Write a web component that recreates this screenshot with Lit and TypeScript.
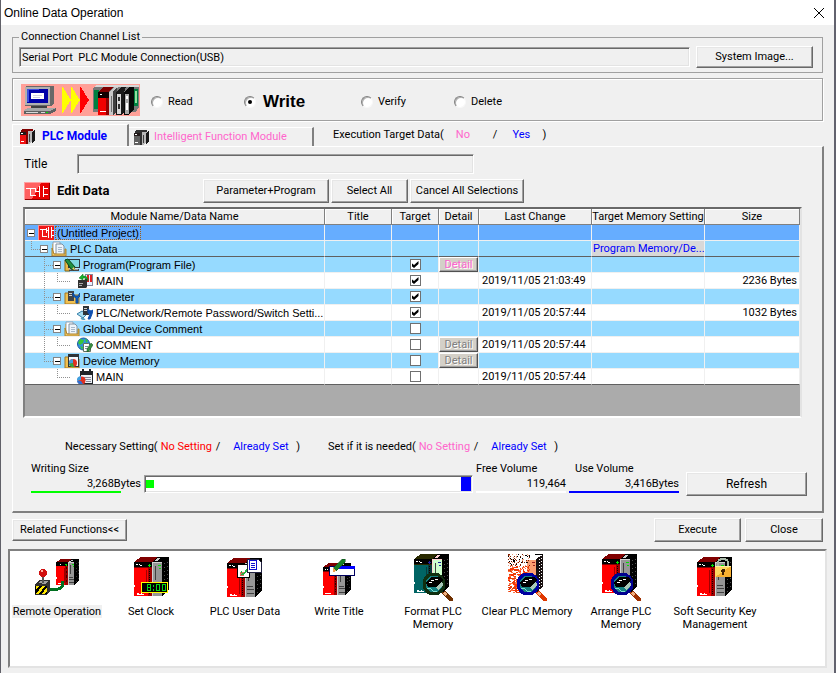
import { LitElement, html, svg, css, nothing } from "lit";
import { customElement } from "lit/decorators.js";
import { classMap } from "lit/directives/class-map.js";

interface DataRow {
  name: string;
  depth: number;
  icon: string;
  tone: "root" | "group" | "leaf";
  last?: boolean;
  check?: boolean;
  detail?: "set" | "off";
  date?: string;
  memory?: string;
  size?: string;
}

const rows: DataRow[] = [
  { name: "(Untitled Project)", depth: 0, icon: "project", tone: "root" },
  { name: "PLC Data", depth: 1, icon: "folder", tone: "group", last: true, memory: "Program Memory/De..." },
  { name: "Program(Program File)", depth: 2, icon: "program", tone: "group", check: true, detail: "set" },
  { name: "MAIN", depth: 3, icon: "main", tone: "leaf", check: true, date: "2019/11/05 21:03:49", size: "2236 Bytes" },
  { name: "Parameter", depth: 2, icon: "param", tone: "group", check: true },
  { name: "PLC/Network/Remote Password/Switch Setti...", depth: 3, icon: "network", tone: "leaf", check: true, date: "2019/11/05 20:57:44", size: "1032 Bytes" },
  { name: "Global Device Comment", depth: 2, icon: "folder", tone: "group", check: false },
  { name: "COMMENT", depth: 3, icon: "comment", tone: "leaf", check: false, detail: "off", date: "2019/11/05 20:57:44" },
  { name: "Device Memory", depth: 2, icon: "memory", tone: "group", last: true, check: false, detail: "off" },
  { name: "MAIN", depth: 3, icon: "device", tone: "leaf", last: true, check: false, date: "2019/11/05 20:57:44" },
];

const headers = ["Module Name/Data Name", "Title", "Target", "Detail", "Last Change", "Target Memory Setting", "Size"];

const folderShape = svg`
  <path d="M1 4h5l1 2h8v9H1z" fill="#f0c050" stroke="#a87820"/>`;

const rowIcons: Record<string, unknown> = {
  project: svg`
    <rect width="16" height="16" fill="#f01818"/><path d="M0 0h16v1H1v15H0z" fill="#ff9090"/>
    <path d="M2 4.500h6M4.500 5v7M4 11.500h5M8.500 3v5M8.500 5.500h2M10.500 2v11M13.500 2v11M14 5.500h2M14 10.500h2" stroke="#fff" fill="none"/>`,
  folder: svg`
    <path d="M1 3h5v12H1z" fill="#e8b848"/><path d="M2 1h7v12H2z" fill="#fff" stroke="#90a0b0"/>
    <path d="M5 3h6l2 2v9H5z" fill="#eef4fa" stroke="#8090a0"/><path d="M7 6.500h4M7 8.500h4M7 10.500h4" stroke="#a8b8c8"/>
    <path d="M1 7l2 6h11V8h1v7H1z" fill="#f0c868" stroke="#b08428"/>`,
  program: svg`
    <path d="M1 3h5v11H1z" fill="#e8b848" stroke="#8c6814"/><rect x="4.500" y="2.500" width="11" height="8" fill="#80d8e0" stroke="#303840"/>
    <path d="M5 12h10v2H5z" fill="#484848"/><path d="M5 12h9" stroke="#eee"/>
    <path d="M1 3l3-1 7 8-1 3-3-1z" fill="#209040" stroke="#0c4818"/><path d="M10 10l1 3-3-1z" fill="#ffd070"/>`,
  main: svg`
    <rect x="8.500" y="1.500" width="7" height="11" fill="#e8f0ff" stroke="#889"/><path d="M11 2v7M14 2v7" stroke="#e02020" stroke-width="2"/>
    <path d="M1 7h6l3-2v9l-2 2H1z" fill="#303030"/><path d="M2 10.500h4M2 12.500h3" stroke="#aaa"/>
    <path d="M2 5l4-4v2c4 0 5 2 5 5-2-3-3-3-5-3v2z" fill="#18b030" stroke="#087010" stroke-width=".5"/>`,
  param: svg`${folderShape}
    <path d="M4 2h6v10H4z" fill="#404448"/><path d="M5 4.500h3M5 6.500h3" stroke="#ccc"/>
    <path d="M9 4v3l3 2v5h2V9l2-2V4l-2 3h-3z" fill="#1060c0" stroke="#0848a0"/>`,
  network: svg`
    <path d="M0 9l5-3 5 3-4 4z" fill="#a8dcf0" stroke="#3880a8"/><path d="M4 13l4 2" stroke="#58a0c0" stroke-width="2"/>
    <path d="M6 1h6v9H6z" fill="#303438"/><path d="M7 3.500h3M7 5.500h3" stroke="#ccc"/>
    <path d="M11 4v4l2 1-2 5h2l2-5 1-4-2 1-2-1z" fill="#1050b0" stroke="#1050b0"/>`,
  comment: svg`
    <circle cx="6.500" cy="7" r="6" fill="#3090e0" stroke="#1858a0"/><path d="M3 2l4 1-1 3-3 2-2-2zM8 1l3 3-2 2zM3 9l3 1-1 3z" fill="#38c838"/>
    <path d="M6.500 6.500h5l2 2v6h-7z" fill="#fff" stroke="#607060"/><path d="M8 9.500h3M8 11.500h4" stroke="#789"/>
    <path d="M10 12l4-6 2 2-4 6-2 1z" fill="#389040" stroke="#104818" stroke-width=".5"/>`,
  memory: svg`${folderShape}
    <rect x="4.500" y="2.500" width="10" height="11" fill="#f4f8fc" stroke="#303438"/><path d="M4 1h11v3H4z" fill="#303438"/>
    <circle cx="9" cy="10" r="4" fill="#e03020"/><path d="M9 10V6a4 4 0 0 0-4 5z" fill="#40a0e0"/><path d="M9 10l-4 1a4 4 0 0 0 5 3z" fill="#30a840"/>`,
  device: svg`
    <rect x="3.500" y="2.500" width="12" height="12" fill="#eef2f6" stroke="#202428"/><path d="M3 2h13v4H3zM5 0h2v3H5zM12 0h2v3h-2z" fill="#202428"/>
    <path d="M7 8.500h7M8 10.500h6M9 12.500h5" stroke="#889"/>
    <circle cx="4.500" cy="11.500" r="4" fill="#e03020"/><path d="M4 11V7a4 4 0 0 0-4 5z" fill="#40a0e0"/><path d="M4 12H0a4 4 0 0 0 6 3z" fill="#3070d0"/>`,
};

interface TowerColors { top: string; body: string; side: string; box: string; lamp: string; edge: string; }
const red: TowerColors = { top: "#800000", body: "#ff0000", side: "#a00000", box: "#969696", lamp: "#00e000", edge: "#d0d0d0" };
const teal: TowerColors = { top: "#2a2a00", body: "#006464", side: "#083c3c", box: "#ccffcc", lamp: "#2020a0", edge: "#ffd0d0" };

const tower = (c: TowerColors) => svg`
  <path d="M0 5l7-5h17l-6 5z" fill=${c.top}/>
  <path d="M18 5l6-5h11v33l-7 6V5z" fill="#000"/>
  <path d="M20 4l4-3h3l-4 3z" fill=${c.edge}/>
  <rect y="5" width="18" height="6" fill="#000"/>
  <path d="M2 7h2v1H2zM5 7h1v1H5zM6 8h2v1H6z" fill="#fff"/>
  <path d="M15 7h1v3h-1zM14 8h3v1h-3z" fill=${c.lamp}/>
  <rect y="11" width="14" height="28" fill=${c.body}/>
  <path d="M0 10h18v1H0z" fill=${c.top}/>
  <path d="M12 13h1v23h-1z" fill=${c.side}/>
  <path d="M3 36h2v1h2v-1h1v1h2v1H3z" fill="#fff"/>
  <path d="M0 28h1v2H0z" fill="#fff"/>
  <rect x="14" y="11" width="4" height="28" fill=${c.side}/>
  <path d="M15.500 12v26" stroke="#100" stroke-dasharray="1 1"/>
  <rect x="18" y="5" width="10" height="34" fill=${c.box}/>
  <path d="M18 5h1v34h-1zM18 5h10v1H18z" fill=${c.edge}/>
  <path d="M24 8h3v1h-3zM25 11h2v1h-2z" fill=${c.lamp}/>
  <path d="M21 9h1v14h-1zM20 28h6v1h-6zM20 31h7v1h-7zM20 35h7v1h-7z" fill="#404040"/>
  <path d="M30.500 6v30M33.500 5v28" stroke="#505050" stroke-dasharray="1 3"/>`;

const lens = (rim: string, handle: string) => svg`
  <path d="M28 38l3-1 8 7v3l-3 1-8-8z" fill=${handle}/><path d="M29 39l2-1 2 2-2 2z" fill="#f0b080"/>
  <circle cx="20" cy="30" r="10" fill="#148080" stroke=${rim} stroke-width="3"/>
  <path d="M12 29l5-6h10l2 3-7 7h-8z" fill="#000"/>
  <path d="M17 26.500h3M21 25.500h3M15 28.500h3" stroke="#fff"/><path d="M22 34l6-7 1 4-4 5z" fill="#a8c8b8"/>
  <path d="M13 34l4 1 3 3 3-1" stroke="#80e0d0" fill="none"/>`;

const scatter = Array.from({ length: 420 }, (_, i) => {
  const h = (i * 7919 + i * i * 31) % 10007;
  const x = h % 22;
  const y = Math.floor(h / 22) % 39;
  const shade = y < 12 ? ["#802000", "#000", "#f0a080"][i % 3] : ["#ff3000", "#e04010", "#ff7040"][i % 3];
  return svg`<rect x=${x} y=${y} width=${y > 12 && x < 12 ? 2 : 1} height="1" fill=${shade}/>`;
});

const toolIcons: Record<string, unknown> = {
  remote: svg`
    <g transform="translate(23 6) scale(.66)">${tower(red)}</g>
    <path d="M15 36h10q5 0 5-8" fill="none" stroke="#007020" stroke-width="3"/>
    <path d="M2 31l4-4h11v11l-3 4H2z" fill="#303030"/><rect x="2" y="33" width="12" height="8" fill="#000"/>
    <path d="M3 41l6-8h3l-6 8zM9 41l5-7v4l-2 3zM3 37l3-4H3z" fill="#ffe800"/>
    <path d="M5 30l2-2h8l-2 3z" fill="#a0a0a0"/><path d="M9 20h2v10H9z" fill="#555"/>
    <circle cx="10" cy="20" r="4" fill="#d01010"/><path d="M8 17h2v2H8z" fill="#ffb0a0"/>`,
  clock: svg`<g transform="translate(7 4)">${tower(red)}
    <rect x="7.500" y="25.500" width="26" height="10" fill="#000" stroke="#ffff00"/>
    <path d="M13.500 27.500h3v6h-3zM13 30.500h4M19.500 28v2M19.500 32v2M22.500 27.500h3v6h-3zM28.500 27.500h3v6h-3z" fill="none" stroke="#00d818"/></g>`,
  user: svg`<g transform="translate(6 5)">${tower(red)}
    <path d="M10.500 6.500h9l3 3v10h-12z" fill="#fff" stroke="#000"/><path d="M13 14h4v4h-4z" fill="#e07060"/>
    <path d="M14 13l2 4 4-6M14 17l7-4" stroke="#20b040" fill="none"/>
    <path d="M20.500 1.500h11l3 3v10h-14z" fill="#fff" stroke="#202040"/><rect x="22.500" y="2.500" width="7" height="9" fill="#fff" stroke="#1010d0"/>
    <path d="M24 5.500h4M24 7.500h4M24 9.500h4" stroke="#1010d0"/></g>`,
  title: svg`<g transform="translate(8 10) scale(.8 .82)">${tower(red)}</g>
    <rect x="14.500" y="13.500" width="25" height="9" fill="#fff" stroke="#000060"/><path d="M22 13h18v3H22z" fill="#0000ff"/>
    <path d="M27 6h3v3L21 18l-3-3z" fill="#188028" stroke="#0c4818" stroke-width=".5"/><path d="M18 15l3 3-3 1z" fill="#f0a050"/>`,
  format: svg`<g transform="translate(5 1)">${tower(teal)}${lens("#103010", "#703000")}</g>`,
  clear: svg`<g transform="translate(5 1)">
    <path d="M28 5l7-5v33l-7 6z" fill="#181010"/><path d="M27 0h8v1h-8z" fill="#000"/>
    <path d="M31.500 2v34M33.500 1v32" stroke="#fff" stroke-dasharray="1 2"/>
    <path d="M19 6h9v18h-9z" fill="#ffa070"/><path d="M24 8h3v1h-3zM25 11h2v1h-2z" fill="#a02020"/>
    ${scatter}${lens("#0000a0", "#e03800")}</g>`,
  arrange: svg`<g transform="translate(5 1)">${tower(red)}${lens("#000090", "#a03000")}</g>`,
  key: svg`<g transform="translate(6 4)">${tower(red)}
    <path d="M21 11V6q0-4 5-4t5 4v5" fill="none" stroke="#a8b8a8" stroke-width="2"/>
    <rect x="18" y="9" width="16" height="11" fill="#ffd860"/><path d="M18 20L34 9v11z" fill="#f8b030"/><path d="M18 9h16v1H18z" fill="#fff0a0"/>
    <path d="M25 12h3v3h-1v3h-2v-3h-1v-2z" fill="#402000"/></g>`,
};

const tools = [
  { icon: "remote", label: "Remote Operation", active: true },
  { icon: "clock", label: "Set Clock" },
  { icon: "user", label: "PLC User Data" },
  { icon: "title", label: "Write Title" },
  { icon: "format", label: "Format PLC Memory" },
  { icon: "clear", label: "Clear PLC Memory" },
  { icon: "arrange", label: "Arrange PLC Memory" },
  { icon: "key", label: "Soft Security Key Management" },
];

const transferArt = html`<svg class="art" viewBox="0 0 119 32" shape-rendering="crispEdges" aria-hidden="true">
  <rect width="119" height="32" fill="#ffa098"/>
  <path d="M4 3l2-1h27v17l-3 3H4z" fill="#686868"/><rect x="4" y="3" width="25" height="18" fill="#b0b0b0"/>
  <rect x="6" y="5" width="21" height="14" fill="#0000a8"/><path d="M6 5h12v1H8v12H6z" fill="#4050e0"/>
  <rect x="10" y="9" width="13" height="6" fill="#fff"/><path d="M12 11.500h9M12 13.500h7" stroke="#d0d0e0"/>
  <path d="M10 22h16v2H10z" fill="#404040"/>
  <path d="M7 24h27l1 3-6 3H3v-4z" fill="#a8a8a8"/><path d="M3 27h26v3H3zM29 27l6-3v3l-6 3z" fill="#606060"/>
  <path d="M5 28.500h12M20 28.500h4" stroke="#d8d8d8"/><path d="M25 28.500h2" stroke="#00e000"/>
  <path d="M41 2l9 14-9 14zM50 2l9 14-9 14z" fill="#ffff00"/><path d="M59 2l9 14-9 14z" fill="#ff0000"/>
  <path d="M72 5l3-4h43v22l-3 5H72z" fill="#787878"/><path d="M75 1h43v2H74z" fill="#d8d8d8"/>
  <rect x="73" y="6" width="5" height="19" fill="#008040"/><rect x="112" y="5" width="5" height="17" fill="#008040"/>
  <path d="M114 7h2v12h-2z" fill="#90e0a0"/>
  <path d="M77 8l5-5h10l-5 5z" fill="#800000"/><rect x="77" y="8" width="11" height="23" fill="#f00000"/><rect x="77" y="8" width="11" height="6" fill="#100000"/>
  <path d="M79 10h2v1h-2zM79 27h6v1h-6z" fill="#fff"/><path d="M85 14h3v17h-3z" fill="#900000"/>
  <path d="M88 8l5-5h4l-3 5v23h-6z" fill="#c8c8c8"/><path d="M92 8l4-5v25l-4 3z" fill="#404040"/>
  <path d="M90.500 12v16" stroke="#707070"/>
  <path d="M95 9l5-6h5l-2 5v20l-3 3h-5z" fill="#181818"/><rect x="96" y="10" width="4" height="20" fill="#d8d8d8"/><path d="M97 13h2v4h-2zM97 20h2v5h-2z" fill="#303030"/>
  <path d="M103 9l5-6h5v22l-5 6h-5z" fill="#080808"/><rect x="104" y="10" width="4" height="20" fill="#a8a8a8"/><path d="M105 12h2v3h-2zM105 19h2v7h-2z" fill="#fff"/>
</svg>`;

const moduleIcon = (body: string, shade: string) => html`<svg class="ico16" viewBox="0 0 16 16" shape-rendering="crispEdges" aria-hidden="true">
  <path d="M0 4l3-4h12l-3 4z" fill=${shade}/><rect y="4" width="6" height="12" fill=${body}/><rect y="4" width="6" height="3" fill="#201818"/>
  <path d="M1 5h2v1H1zM1 13h3v1H1z" fill="#fff"/><rect x="6" y="4" width="3" height="12" fill=${shade}/>
  <path d="M9 3h5v10l-3 3H9z" fill="#b8b8b8"/><path d="M13 4l3-3v12l-3 3z" fill="#181818"/><path d="M10 6h1v8h-1z" fill="#404040"/>
</svg>`;

@customElement("tree-cell")
class TreeCell extends LitElement {
  static properties = { row: { attribute: false } };
  declare row: DataRow;

  static styles = css`
    :host { display: flex; align-items: center; height: 15px; overflow: hidden; }
    svg { flex: none; display: block; }
    .label { margin-left: 1px; padding-left: 2px; font: 11px/14px "Liberation Sans", sans-serif; white-space: nowrap; }
    .focus { padding-right: 2px; outline: 1px dotted #a05a10; outline-offset: -1px; }
  `;

  render() {
    const { depth, icon, name, last } = this.row;
    const left = depth * 13 + 6;
    const mid = left - 13;
    const leaf = depth === 3;
    const lines = [];
    if (depth > 0) {
      lines.push(svg`<path d="M${mid + 0.5} 0V${last || leaf ? 8 : 16}M${mid} 8.500H${leaf ? mid + 14 : left - 4}"/>`);
      if (leaf && !last) lines.push(svg`<path d="M${mid - 12.5} 0V16"/>`);
    }
    return html`
      <svg width=${(depth + 1) * 13} height="16" shape-rendering="crispEdges" aria-hidden="true">
        <g stroke="#909090" stroke-dasharray="1 1" fill="none">${lines}</g>
        ${leaf ? nothing : svg`<rect x=${left - 3.5} y="4.500" width="7" height="7" fill="#fff" stroke="#848484"/><path d="M${left - 2} 8.500h5" stroke="#000"/>`}
      </svg>
      <svg width="16" height="16" viewBox="0 0 16 16" aria-hidden="true">${rowIcons[icon]}</svg>
      <span class=${classMap({ label: true, focus: depth === 0 })}>${name}</span>`;
  }
}

@customElement("app-root")
class AppRoot extends LitElement {
  static styles = css`
    :host { display: block; min-height: 100vh; box-sizing: border-box; background: #f0f0f0; color: #000;
      border-left: 1px solid #606068; border-right: 2px solid #62626e;
      font-family: Roboto, "Liberation Sans", sans-serif; font-size: 11px; line-height: 14px; }
    * { box-sizing: border-box; }
    button, input { font: inherit; color: inherit; margin: 0; border-radius: 0; }
    button { background: #f0f0f0; padding: 0; }
    svg { display: block; }

    .titlebar { display: flex; align-items: center; justify-content: space-between; height: 25px; background: #fff; padding: 0 10px 0 3px; }
    .titlebar h1 { font: 12px/14px "Liberation Sans", sans-serif; margin: 0; }
    .close { border: 0; background: none; }

    .raised { height: 24px; border: 1px solid; border-color: #fff #696969 #696969 #fff; box-shadow: inset -1px -1px #a0a0a0, inset 1px 1px #e6e6e6; white-space: nowrap; }
    .sunken { height: 20px; min-width: 0; padding: 0 2px; outline: 0; background: #f0f0f0; border: 1px solid; border-color: #a0a0a0 #fff #fff #a0a0a0; box-shadow: inset 1px 1px #696969, inset -1px -1px #e3e3e3; }
    .group { margin: 0 11px; border: 1px solid #a0a0a0; box-shadow: 1px 1px #fff, inset 1px 1px #fff; }

    fieldset.group { margin-top: 6px; padding: 3px 9px 4px 6px; box-shadow: none; }
    legend { padding: 0 2px; line-height: 12px; }
    .channel { display: flex; gap: 6px; align-items: center; }
    .channel .sunken { flex: 1; }
    .channel .raised { width: 117px; height: 22px; }

    .modes { display: flex; align-items: center; gap: 11px; margin-top: 5px; height: 43px; padding-left: 8px; }
    .art { width: 119px; height: 32px; flex: none; }
    .choices { display: grid; grid-template-columns: 93px 117px 93px auto; align-items: center; padding-top: 5px; }
    .choices label { display: flex; align-items: center; gap: 5px; }
    .choices .current { gap: 7px; font: bold 17px/20px "Liberation Sans", sans-serif; }
    input[type="radio"] { appearance: none; width: 12px; height: 12px; border-radius: 50%; background: #fff; border: 1px solid; border-color: #808080 #f8f8f8 #f8f8f8 #808080; box-shadow: inset 1px 1px #b0b0b0; display: grid; place-items: center; }
    input[type="radio"]:checked::before { content: ""; width: 4px; height: 4px; border-radius: 50%; background: #000; }

    .tabs { display: flex; align-items: flex-end; margin: 3px 11px 0; height: 22px; }
    .tab { display: flex; align-items: center; gap: 5px; height: 19px; padding: 0 5px; border: 0; border-top: 1px solid #fff; border-right: 2px solid #808080; color: #ff66cc; }
    .tab.active { width: 117px; height: 22px; gap: 7px; padding: 0 7px; border-left: 1px solid #fff; color: #0000ff; font-size: 12px; font-weight: 700; }
    .tab.other { width: 185px; }
    .ico16 { width: 15px; height: 16px; flex: none; }
    .keys { display: flex; align-items: center; align-self: center; margin-left: 19px; }
    .pink { color: #ff66cc; } .blue { color: #0000ff; } .red { color: #ff0000; }
    .keys .pink { width: 37px; margin-left: 12px; } .keys .blue { width: 30px; margin-left: 15px; }

    .pane { margin: 0 10px 0 11px; padding: 7px 20px 18px 10px; border: solid; border-width: 1px 2px 2px 1px; border-color: #fff #808080 #808080 #fff; }
    .title-row { display: flex; align-items: center; padding-left: 1px; font-size: 12px; }
    .title-row label { width: 53px; }
    .title-row .sunken { width: 51%; }
    .edit-row { display: flex; align-items: center; margin: 5px 0 4px; padding-left: 1px; }
    .edit-row h2 { width: 146px; margin: 0 0 0 7px; font-size: 13px; line-height: 16px; }
    .edit-row .raised + .raised { margin-left: 2px; }
    .w-param { width: 126px; } .w-select { width: 77px; } .w-cancel { width: 114px; }

    .grid { border: 2px solid; border-color: #696969 #e3e3e3 #fff #808080; background: #ababab; padding-bottom: 31px; }
    table { width: 100%; table-layout: fixed; border-spacing: 0; }
    th, td { height: 16px; padding: 0; line-height: 15px; white-space: nowrap; overflow: hidden; border-right: 1px solid #f0f0f0; border-bottom: 1px solid #f0f0f0; }
    th { font-weight: 400; background: #f0f0f0; border-color: #808080; box-shadow: inset 1px 1px #fff; }
    .c-name { width: 300px; } .c-title { width: 67px; } .c-target { width: 47px; } .c-detail { width: 40px; } .c-date, .c-mem { width: 113px; }
    .root td { background: #66adff; }
    .group-row td { background: #96daff; }
    .leaf td { background: #fff; }
    tbody tr:nth-child(2) td, tbody tr:last-child td { border-bottom-color: #606060; }
    td.num { text-align: right; padding-right: 2px; }
    td.date { padding-left: 3px; }
    .group-row td.mem { background: #d8d8d8; color: #0000ff; padding-left: 1px; }
    input[type="checkbox"] { appearance: none; display: grid; place-items: center; width: 11px; height: 11px; margin: 0 auto; background: #fff; border: 1px solid #707070; }
    input[type="checkbox"]:checked::before { content: ""; width: 7px; height: 7px; background: #000; clip-path: polygon(0 28%, 36% 57%, 100% 0, 100% 43%, 36% 100%, 0 72%); }
    .detail { display: block; width: 100%; height: 15px; line-height: 13px; background: #d4d0c8; color: #808080; border: 1px solid; border-color: #fff #505050 #505050 #fff; box-shadow: inset -1px -1px #a0a0a0; text-shadow: 1px 1px #fff; }
    .detail.set { color: #ff66cc; }

    .legend { display: flex; margin: 22px 0 8px 42px; }
    .legend > span { display: flex; width: 263px; }
    .legend b { font-weight: 400; }
    .legend .state { padding-left: 3px; width: 58px; }
    .legend .blue { width: 63px; margin-left: 13px; }

    .volume { display: grid; grid-template-columns: 110px 1fr 90px 110px 121px; align-items: end; margin: 0 -1px 0 8px; column-gap: 3px; }
    .volume dl, .volume dd { margin: 0; }
    .volume dd { text-align: right; height: 17px; line-height: 16px; }
    .volume .line { height: 2px; margin-top: -2px; }
    .line.green { width: 90px; background: #00ff00; } .line.white { background: #fff; } .line.navy { background: #0000ff; }
    .indent { padding-left: 6px; }
    .meter { display: flex; align-items: center; justify-content: space-between; height: 18px; padding: 1px; background: #fff; }
    .meter i { width: 8px; height: 8px; background: #00ff00; }
    .meter b { width: 10px; height: 14px; background: #0000ff; }
    .volume .raised { margin-left: 4px; margin-right: -4px; margin-bottom: -3px; font-size: 12px; }

    .actions { display: flex; align-items: center; gap: 4px; margin: 5px 11px 7px; }
    .actions .related { width: 115px; height: 22px; margin-right: auto; }
    .w-exec { width: 87px; } .w-close { width: 78px; }

    .functions { display: flex; height: 119px; margin: 0 7px; padding: 2px 0; background: #fff; border: 2px solid; border-color: #808080 #e3e3e3 #e3e3e3 #808080; list-style: none; }
    .functions li { width: 94px; }
    .tool { width: 100%; border: 0; background: none; text-align: center; line-height: 13px; display: flex; flex-direction: column; align-items: center; }
    .tool svg { width: 48px; height: 48px; margin-bottom: 4px; }
    .tool span { padding: 0 1px; }
    .tool .picked { background: #f0f0f0; }
  `;

  private cells(r: DataRow) {
    return html`<tr class=${r.tone === "group" ? "group-row" : r.tone}>
      <td><tree-cell .row=${r}></tree-cell></td>
      <td></td>
      <td>${r.check === undefined ? nothing : html`<input type="checkbox" aria-label=${r.name} ?checked=${r.check} />`}</td>
      <td>${r.detail ? html`<button class=${classMap({ detail: true, set: r.detail === "set" })}>Detail</button>` : nothing}</td>
      <td class="date">${r.date ?? nothing}</td>
      <td class=${r.memory ? "mem" : ""}>${r.memory ?? nothing}</td>
      <td class="num">${r.size ?? nothing}</td>
    </tr>`;
  }

  render() {
    return html`
      <header class="titlebar">
        <h1>Online Data Operation</h1>
        <button class="close" aria-label="Close window">
          <svg width="10" height="10" viewBox="0 0 10 10"><path d="M0 0l10 10M10 0L0 10" stroke="#000" fill="none"/></svg>
        </button>
      </header>

      <fieldset class="group">
        <legend>Connection Channel List</legend>
        <div class="channel">
          <input class="sunken" readonly aria-label="Connection channel" value="Serial Port  PLC Module Connection(USB)" />
          <button class="raised">System Image...</button>
        </div>
      </fieldset>

      <section class="group modes">
        ${transferArt}
        <div class="choices" role="radiogroup" aria-label="Operation">
          <label><input type="radio" name="mode" />Read</label>
          <label class="current"><input type="radio" name="mode" checked />Write</label>
          <label><input type="radio" name="mode" />Verify</label>
          <label><input type="radio" name="mode" />Delete</label>
        </div>
      </section>

      <nav class="tabs">
        <button class="tab active">${moduleIcon("#f01010", "#800000")}PLC Module</button>
        <button class="tab other">${moduleIcon("#606060", "#303030")}Intelligent Function Module</button>
        <div class="keys">Execution Target Data( <span class="pink">No</span>/<span class="blue">Yes</span>)</div>
      </nav>

      <main class="pane">
        <div class="title-row"><label for="title">Title</label><input id="title" class="sunken" readonly /></div>
        <div class="edit-row">
          <svg width="26" height="18" viewBox="0 0 26 18" shape-rendering="crispEdges" aria-hidden="true">
            <rect width="26" height="18" fill="#e80000"/><path d="M1 1h16L8 17H1z" fill="#ff6060"/><path d="M0 0h26v1H1v17H0z" fill="#ffa0a0"/><path d="M25 1h1v17H1v-1h24z" fill="#900000"/>
            <path d="M2 6.500h10M6.500 7v7M6 13.500h6M11.500 7v3M12 9.500h3M15.500 4v11M19.500 4v11M20 6.500h4M20 12.500h4" stroke="#fff" fill="none"/>
          </svg>
          <h2>Edit Data</h2>
          <button class="raised w-param">Parameter+Program</button>
          <button class="raised w-select">Select All</button>
          <button class="raised w-cancel">Cancel All Selections</button>
        </div>

        <div class="grid">
          <table>
            <colgroup><col class="c-name" /><col class="c-title" /><col class="c-target" /><col class="c-detail" /><col class="c-date" /><col class="c-mem" /><col /></colgroup>
            <thead><tr>${headers.map((h) => html`<th>${h}</th>`)}</tr></thead>
            <tbody>${rows.map((r) => this.cells(r))}</tbody>
          </table>
        </div>

        <div class="legend">
          <span>Necessary Setting(<b class="red state">No Setting</b>/<b class="blue">Already Set</b>)</span>
          <span>Set if it is needed(<b class="pink state">No Setting</b>/<b class="blue">Already Set</b>)</span>
        </div>

        <div class="volume">
          <dl><dt>Writing Size</dt><dd>3,268Bytes</dd><div class="line green"></div></dl>
          <div class="sunken meter"><i></i><b></b></div>
          <dl><dt>Free Volume</dt><dd>119,464</dd><div class="line white"></div></dl>
          <dl><dt class="indent">Use Volume</dt><dd>3,416Bytes</dd><div class="line navy"></div></dl>
          <button class="raised">Refresh</button>
        </div>
      </main>

      <div class="actions">
        <button class="raised related">Related Functions&lt;&lt;</button>
        <button class="raised w-exec">Execute</button>
        <button class="raised w-close">Close</button>
      </div>

      <ul class="functions">
        ${tools.map((t) => html`<li><button class="tool">
          <svg viewBox="0 0 48 48" shape-rendering="crispEdges" aria-hidden="true">${toolIcons[t.icon]}</svg>
          <span class=${classMap({ picked: !!t.active })}>${t.label}</span>
        </button></li>`)}
      </ul>`;
  }
}
